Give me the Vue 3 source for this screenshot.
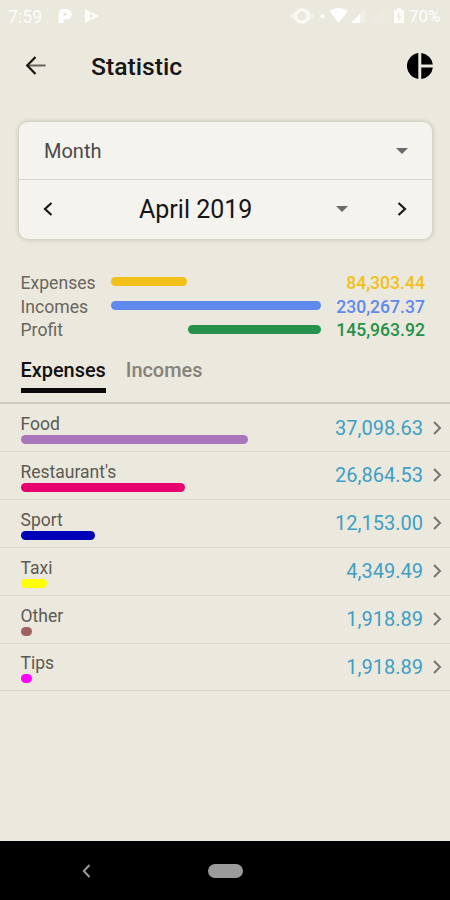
<script setup>
import { ref } from "vue";

const tab = ref("Expenses");
const tabs = ["Expenses", "Incomes"];

const summary = [
  { label: "Expenses", value: "84,303.44", color: "#f2c018", start: 0, width: 76.5 },
  { label: "Incomes", value: "230,267.37", color: "#6089ee", start: 0, width: 210.5 },
  { label: "Profit", value: "145,963.92", color: "#27904b", start: 77.5, width: 133 }
];

const categories = [
  { name: "Food", value: "37,098.63", color: "#ab75bc", width: 227.5 },
  { name: "Restaurant's", value: "26,864.53", color: "#e9006f", width: 164.5 },
  { name: "Sport", value: "12,153.00", color: "#0000b8", width: 74 },
  { name: "Taxi", value: "4,349.49", color: "#ffff00", width: 26.5 },
  { name: "Other", value: "1,918.89", color: "#a16161", width: 11.5 },
  { name: "Tips", value: "1,918.89", color: "#ff00ff", width: 11.5 }
];
</script>

<template>
  <div class="screen">
    <div class="status-bar">
      <span class="clock">7:59</span>
      <svg class="status-left" width="46" height="16" viewBox="0 0 46 16">
        <path d="M1 4l2-3h5.500a4.800 4.800 0 0 1 0 10.500H5.500V15H.5V10z" fill="#fff" />
        <path d="M5.500 4.500h2a1.600 1.600 0 0 1 0 3.200h-2z" fill="#ebe8dd" />
        <path d="M27 1.500L41.500 8 27 14.500z" fill="#fff" opacity=".85" />
        <path d="M32 6l4 2-4 2z" fill="#ebe8dd" />
      </svg>
      <svg class="status-right" width="116" height="18" viewBox="0 0 116 18">
        <g fill="none" stroke="#fff" opacity=".75">
          <circle cx="11" cy="9" r="6.200" stroke-width="3" />
          <path d="M3.500 5v8M18.500 5v8M1 7v4M21 7v4" stroke-width="1.500" />
        </g>
        <path d="M29 9l2.500-2.500L34 9l-2.500 3z" fill="#fff" />
        <path d="M38.500 4q9-6 18.500 0l-9.500 12z" fill="#fff" />
        <path d="M74 2v14H60z" fill="#fff" opacity=".3" />
        <path d="M69 7v9h-9z" fill="#fff" />
        <path d="M94 2v14H80z" fill="#fff" opacity=".12" />
        <path d="M103 3h3V1h4v2h3v13h-10z" fill="#fff" opacity=".85" />
        <path d="M108.500 5l-3 5h2v4l3-5h-2z" fill="#ebe8dd" />
      </svg>
      <span class="battery">70%</span>
    </div>

    <header class="app-bar">
      <svg class="back" width="22" height="22" viewBox="0 0 22 22">
        <path d="M20.500 10.500H2.500" fill="none" stroke="#65635a" stroke-width="2" />
        <path d="M10.500 2L2.200 10.500l8.300 8.500" fill="none" stroke="#15140f" stroke-width="2.200" />
      </svg>
      <h1>Statistic</h1>
      <svg class="pie" width="26" height="26" viewBox="0 0 26 26">
        <path d="M11.300 0.100v25.800A13 13 0 0 1 11.300 .1zM14.300 .1A13 13 0 0 1 25.900 11.400H14.300zM14.300 14.400h11.600A13 13 0 0 1 14.300 25.900z" />
      </svg>
    </header>

    <section class="period">
      <div class="period-type">
        <span>Month</span>
        <i class="caret"></i>
      </div>
      <div class="period-value">
        <svg width="10" height="14" viewBox="0 0 10 14">
          <path d="M8.500 1L2 7l6.500 6" />
        </svg>
        <span class="date">April 2019</span>
        <i class="caret"></i>
        <svg class="next" width="10" height="14" viewBox="0 0 10 14">
          <path d="M1.500 1L8 7l-6.500 6" />
        </svg>
      </div>
    </section>

    <section class="summary">
      <div v-for="row in summary" :key="row.label" class="summary-row">
        <span class="label">{{ row.label }}</span>
        <div class="track">
          <div class="bar" :style="{ width: row.width + 'px', marginLeft: row.start + 'px', background: row.color }"></div>
        </div>
        <span class="total" :style="{ color: row.color }">{{ row.value }}</span>
      </div>
    </section>

    <nav class="tabs">
      <button v-for="t in tabs" :key="t" :class="{ active: tab === t }" @click="tab = t">{{ t }}</button>
    </nav>

    <ul class="categories">
      <li v-for="item in categories" :key="item.name">
        <div class="category">
          <span class="name">{{ item.name }}</span>
          <div class="bar" :style="{ width: item.width + 'px', background: item.color }"></div>
        </div>
        <span class="amount">{{ item.value }}</span>
        <svg width="9" height="14" viewBox="0 0 9 14">
          <path d="M1 1l6 6-6 6" />
        </svg>
      </li>
    </ul>

    <footer class="nav-bar">
      <svg width="9" height="14" viewBox="0 0 9 14">
        <path d="M7.500 1L1.800 7l5.700 6" />
      </svg>
      <div class="home"></div>
    </footer>
  </div>
</template>

<style>
body {
  margin: 0;
  background: #ebe8dd;
}
</style>

<style scoped>
* {
  box-sizing: border-box;
}

.screen {
  width: 450px;
  height: 900px;
  display: flex;
  flex-direction: column;
  overflow: hidden;
  background: #ebe8dd;
  color: #161616;
  font-family: Roboto, "Liberation Sans", sans-serif;
}

svg {
  display: block;
  flex: none;
}

.status-bar {
  height: 32px;
  display: flex;
  align-items: center;
  padding: 0 7px 0 8px;
  color: #fff;
  font-size: 17.8px;
}

.clock {
  width: 50px;
  opacity: 0.9;
}

.status-right {
  margin-left: auto;
}

.battery {
  width: 34px;
  margin-left: 2px;
  font-size: 17px;
}

.app-bar {
  height: 68px;
  display: flex;
  align-items: center;
  padding: 0 17px 0 25px;
}

h1 {
  margin: 1px 0 0 44px;
  font-size: 24.7px;
  font-weight: 500;
  line-height: 28px;
}

.pie {
  margin-left: auto;
}

.period {
  margin: 22px 18px 0 19px;
  height: 117px;
  flex: none;
  border-radius: 9px;
  background: #f4f3ee;
  box-shadow: 0 0 4px 1px rgba(80, 75, 55, 0.22);
}

.period-type {
  height: 58px;
  display: flex;
  align-items: center;
  justify-content: space-between;
  padding: 0 24px 0 25px;
  border-bottom: 1px solid #d6d5d0;
  color: #4a4a4a;
  font-size: 20px;
}

.caret {
  border: 6px solid transparent;
  border-top-color: #6a6a6a;
  border-bottom: 0;
}

.period-value {
  height: 59px;
  display: flex;
  align-items: center;
  padding: 0 25px 2px 24px;
}

.period-value path {
  fill: none;
  stroke: #1a1a1a;
  stroke-width: 2.2;
}

.date {
  width: 283px;
  padding: 2px 0 0 86px;
  font-size: 25px;
}

.next {
  margin-left: auto;
}

.summary {
  padding: 31px 25px 0 20.5px;
}

.summary-row {
  height: 23.7px;
  display: flex;
  align-items: center;
}

.label {
  width: 90px;
  padding-top: 2px;
  color: #69665e;
  font-size: 17.6px;
}

.track {
  width: 211px;
}

.bar {
  height: 9px;
  border-radius: 4.5px;
}

.total {
  flex: 1;
  padding-top: 2px;
  text-align: right;
  font-size: 17.6px;
  font-weight: 500;
}

.tabs {
  height: 63px;
  flex: none;
  display: flex;
  align-items: flex-start;
  gap: 20px;
  padding: 15px 20px 0 20.5px;
  border-bottom: 2px solid #cdcabf;
}

.tabs button {
  height: 37px;
  padding: 3px 0 6px;
  border: 0;
  border-bottom: 5px solid transparent;
  background: none;
  color: #85827b;
  font-family: inherit;
  font-size: 19.9px;
  font-weight: 500;
  line-height: 23px;
}

.tabs .active {
  border-color: #0a0a0a;
  color: #111;
}

.categories {
  margin: 0;
  padding: 0;
  list-style: none;
}

.categories li {
  height: 47.9px;
  display: flex;
  align-items: center;
  padding: 0 8px 0 20.5px;
  border-bottom: 1.5px solid #dad7cb;
}

.category {
  flex: 1;
}

.name {
  display: block;
  margin-bottom: 1px;
  padding-top: 3px;
  color: #5c5a52;
  font-size: 17.5px;
  line-height: 20px;
}

.amount {
  margin-right: 10px;
  color: #3f9fc5;
  font-size: 20px;
}

.categories path {
  fill: none;
  stroke: #77756f;
  stroke-width: 2;
}

.nav-bar {
  height: 59.5px;
  flex: none;
  display: flex;
  align-items: center;
  margin-top: auto;
  padding: 1px 0 0 82px;
  background: #000;
}

.nav-bar path {
  fill: none;
  stroke: #999;
  stroke-width: 2;
}

.home {
  width: 35px;
  height: 14px;
  margin-left: 117px;
  border-radius: 7px;
  background: #9b9b9b;
}
</style>
